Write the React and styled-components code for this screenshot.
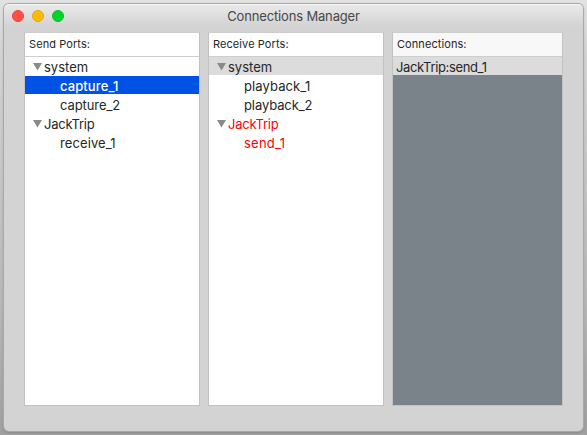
import React from 'react';
import styled, { createGlobalStyle } from 'styled-components';

const GlobalStyle = createGlobalStyle`
  * { box-sizing: border-box; }
  html, body { margin: 0; height: 100%; }
  body { overflow: hidden; font-family: Inter, "Liberation Sans", sans-serif; }
`;

const Desktop = styled.div`
  width: 587px;
  height: 435px;
  padding: 4px 4px 4px;
  background: linear-gradient(#e2e2e2 0, #d4d4d4 50px, #b8b8b8 300px, #a0a0a0 100%);
`;

const Window = styled.main`
  display: flex;
  flex-direction: column;
  height: 427px;
  border-radius: 5px;
  background: #d3d3d3;
  box-shadow: 0 0 0 1px #a9a9a9, 0 1px 3px rgba(0, 0, 0, 0.3);
`;

const TitleBar = styled.header`
  display: grid;
  grid-template-columns: 80px 1fr 80px;
  align-items: center;
  flex: none;
  height: 22px;
  border-top: 1px solid #f5f5f5;
  border-radius: 5px 5px 0 0;
  background: linear-gradient(#e9e9e9, #d3d3d3);
`;

const Lights = styled.div`
  display: flex;
  gap: 8px;
  padding-left: 8px;
`;

const Light = styled.span`
  width: 12px;
  height: 12px;
  border-radius: 50%;
  background: ${(p) => p.$fill};
  border: 1px solid ${(p) => p.$edge};
`;

const Title = styled.h1`
  margin: 0;
  font-size: 13px;
  font-weight: 400;
  line-height: 20px;
  letter-spacing: -0.16px;
  text-align: center;
  white-space: nowrap;
  color: #484848;
`;

const Columns = styled.div`
  display: grid;
  grid-template-columns: 176px 176px 171px;
  gap: 8px;
  height: 374px;
  margin: 6px 20px 0;
`;

const Panel = styled.section`
  border: 1px solid #c2c2c2;
  border-top-color: #cecece;
  background: ${(p) => (p.$filled ? '#7a8389' : '#fff')};
`;

const PanelHeader = styled.h2`
  height: 24px;
  margin: 0;
  padding-left: 4px;
  border-bottom: 1px solid #cecece;
  background: ${(p) => (p.$muted ? '#f8f8f8' : '#fff')};
  font-size: 11px;
  font-weight: 400;
  line-height: 23px;
  letter-spacing: 0.08px;
  color: #262626;
`;

const List = styled.ul`
  margin: 0;
  padding: 0;
  list-style: none;
`;

const rowFill = { selected: '#0052e5', current: '#dcdcdc' };

const Row = styled.li`
  display: flex;
  align-items: center;
  height: 18px;
  margin-bottom: 1px;
  padding-left: ${(p) => p.$indent}px;
  background: ${(p) => rowFill[p.$state] || 'transparent'};
  color: ${(p) => (p.$state === 'selected' ? '#fff' : p.$alert ? '#fb0007' : '#262626')};
  font-size: 13px;
  font-weight: ${(p) => (p.$state === 'selected' ? 500 : 400)};
  line-height: 20px;
  letter-spacing: ${(p) => p.$tracking || 0}px;
  white-space: nowrap;
`;

const Label = styled.span`
  height: 18px;
`;

const Arrow = styled.svg`
  flex: none;
  width: 9px;
  height: 8px;
  margin: 2px 2px 0 0;
  fill: #8a8a8a;
`;

const panels = [
  {
    title: 'Send Ports:',
    rows: [
      { text: 'system', group: true },
      { text: 'capture_1', state: 'selected', tracking: 0.1 },
      { text: 'capture_2', tracking: -0.08 },
      { text: 'JackTrip', group: true, tracking: -0.25 },
      { text: 'receive_1', tracking: 0.1 },
    ],
  },
  {
    title: 'Receive Ports:',
    rows: [
      { text: 'system', group: true, state: 'current' },
      { text: 'playback_1', tracking: 0.1 },
      { text: 'playback_2', tracking: -0.1 },
      { text: 'JackTrip', group: true, alert: true, tracking: -0.25 },
      { text: 'send_1', alert: true, tracking: 0.25 },
    ],
  },
  {
    title: 'Connections:',
    filled: true,
    rows: [{ text: 'JackTrip:send_1', state: 'current', indent: 3, tracking: -0.36 }],
  },
];

function PortRow({ row }) {
  const indent = row.indent ?? (row.group ? 8 : 35);
  return (
    <Row $indent={indent} $state={row.state} $alert={row.alert} $tracking={row.tracking}>
      {row.group && (
        <Arrow viewBox="0 0 9 8">
          <path d="M0 0h9L4.5 7.5z" />
        </Arrow>
      )}
      <Label>{row.text}</Label>
    </Row>
  );
}

export default function App() {
  return (
    <Desktop>
      <GlobalStyle />
      <Window>
        <TitleBar>
          <Lights>
            <Light $fill="#ff4f47" $edge="#e9443d" />
            <Light $fill="#ffbc04" $edge="#e5a50d" />
            <Light $fill="#00d42b" $edge="#0dbd2b" />
          </Lights>
          <Title>Connections Manager</Title>
        </TitleBar>
        <Columns>
          {panels.map((panel) => (
            <Panel key={panel.title} $filled={panel.filled}>
              <PanelHeader $muted={panel.filled}>{panel.title}</PanelHeader>
              <List>
                {panel.rows.map((row) => (
                  <PortRow key={row.text} row={row} />
                ))}
              </List>
            </Panel>
          ))}
        </Columns>
      </Window>
    </Desktop>
  );
}
